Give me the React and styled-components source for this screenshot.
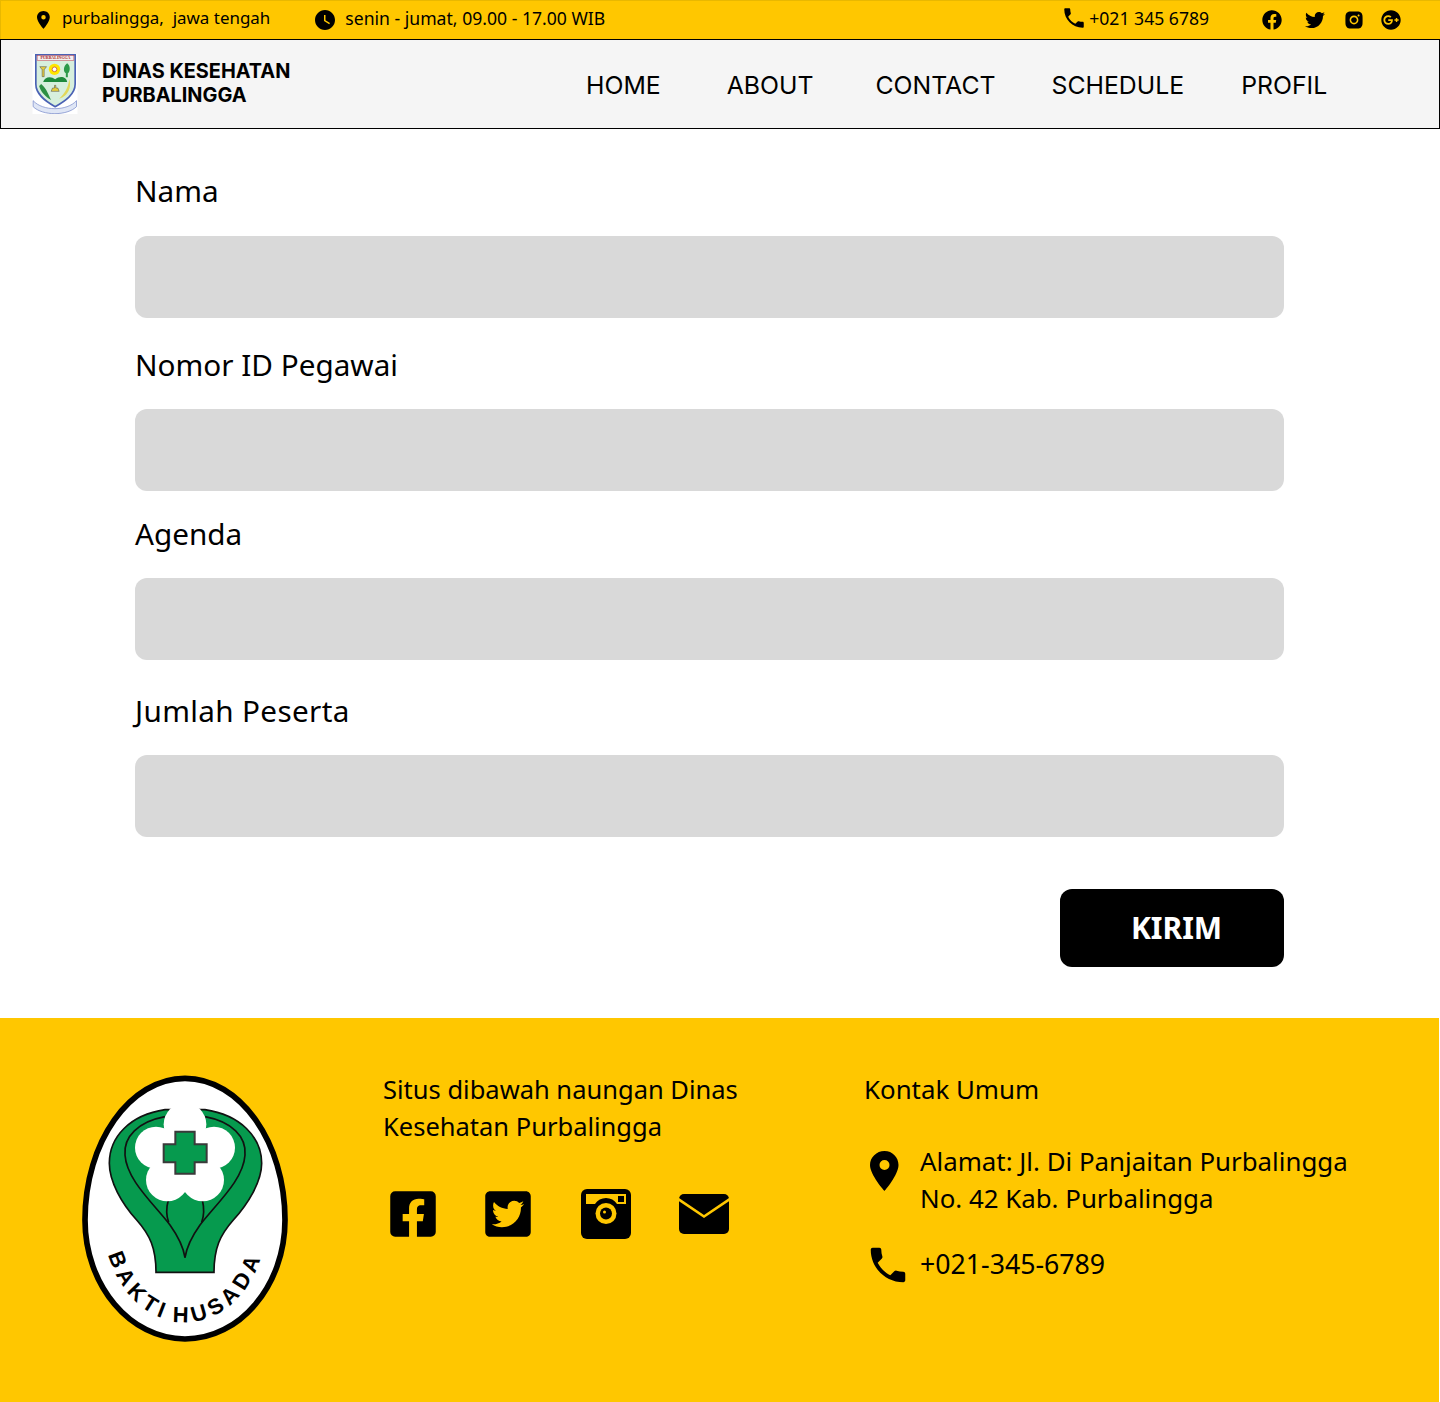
import React from 'react';
import styled, { createGlobalStyle } from 'styled-components';
import { FaFacebook, FaTwitter, FaGooglePlus, FaFacebookSquare, FaTwitterSquare } from 'react-icons/fa';
import { AiFillInstagram } from 'react-icons/ai';
import { MdWatchLater, MdPhone } from 'react-icons/md';

const Global = createGlobalStyle`
  html, body { margin: 0; padding: 0; background: #fff; }
  body { font-family: "Noto Sans", "Liberation Sans", sans-serif; color: #000; }
  * { box-sizing: border-box; }
`;

const Page = styled.div`
  width: 1440px;
  height: 1402px;
  display: flex;
  flex-direction: column;
  overflow: hidden;
`;

/* top bar */
const TopBar = styled.div`
  height: 40px;
  flex: none;
  background: #ffc700;
  border: 1px solid #e9b800;
  border-right: 0;
  display: flex;
  align-items: center;
  padding-bottom: 1px;
`;

const TopItem = styled.div`
  display: flex;
  align-items: center;
  margin-left: ${({ $left }) => $left}px;
  gap: ${({ $gap }) => $gap}px;
`;

const TopText = styled.span`
  font-size: ${({ $size }) => $size}px;
  margin-bottom: 4px;
  white-space: pre;
`;

const TopPhone = styled(MdPhone)`
  margin-bottom: 3px;
`;

const TopSocials = styled.div`
  display: flex;
  align-items: center;
  margin-left: 53px;
`;

const TopSocial = styled.div`
  width: ${({ $w }) => $w}px;
  display: flex;
`;

/* header */
const Header = styled.header`
  height: 90px;
  flex: none;
  margin-top: -1px;
  background: #f5f5f5;
  border: 1px solid #000;
  display: flex;
  align-items: center;
  padding-left: 31px;
  font-family: Inter, "Liberation Sans", sans-serif;
`;

const Brand = styled.div`
  margin-left: 24px;
  margin-bottom: 2px;
  font-size: 19.9px;
  line-height: 24px;
  font-weight: 700;
  width: 260px;
`;

const Nav = styled.nav`
  display: flex;
  margin-left: 224px;
  margin-top: 2px;
`;

const NavLink = styled.a`
  font-size: 24.8px;
  line-height: 30px;
  color: #000;
  margin-right: ${({ $gap }) => $gap}px;
  white-space: nowrap;
`;

/* form */
const Form = styled.main`
  flex: 1;
  padding: 0 156px 0 135px;
  display: flex;
  flex-direction: column;
`;

const Label = styled.label`
  display: block;
  font-size: 29.7px;
  line-height: 44px;
  letter-spacing: ${({ $spacing }) => $spacing}px;
  margin-top: ${({ $top }) => $top}px;
  margin-bottom: ${({ $bottom }) => $bottom}px;
`;

const Input = styled.div`
  height: 82px;
  border-radius: 12px;
  background: #d9d9d9;
`;

const Submit = styled.button`
  align-self: flex-end;
  width: 224px;
  height: 78px;
  margin-top: 52px;
  padding: 0 0 2px 9px;
  border: 0;
  border-radius: 12px;
  background: #000;
  color: #fff;
  font-family: "Noto Sans", sans-serif;
  font-size: 30px;
  font-weight: 700;
`;

/* footer */
const Footer = styled.footer`
  height: 384px;
  width: 1439px;
  flex: none;
  background: #ffc700;
  display: flex;
  line-height: 37px;
`;

const EmblemWrap = styled.div`
  width: 383px;
  flex: none;
  padding: 47px 0 0 70px;
`;

const MiddleCol = styled.div`
  width: 481px;
  flex: none;
  padding-top: 53px;
  font-size: 25.5px;
`;

const Socials = styled.div`
  display: flex;
  align-items: center;
  margin-top: 43px;
  margin-left: 4px;
`;

const SocialSlot = styled.div`
  width: ${({ $w }) => $w}px;
  display: flex;
`;

const ContactCol = styled.div`
  padding-top: 53px;
  font-size: 25.85px;
`;

const ContactRow = styled.div`
  display: flex;
  margin-top: ${({ $top }) => $top}px;
`;

const ContactIcon = styled.div`
  width: ${({ $w }) => $w}px;
  flex: none;
  display: flex;
  margin-left: ${({ $shift }) => $shift}px;
  margin-top: ${({ $up }) => $up}px;
  height: 0;
`;

const PhoneText = styled.div`
  font-size: 26.7px;
`;

const Emblem = () => (
  <svg width="230" height="285" viewBox="0 0 690 855">
    <path d="M345 40 C510 40 645 231 645 465 C645 661 510 822 345 822 C180 822 45 661 45 465 C45 231 180 40 345 40 Z" fill="#fff" stroke="#000" strokeWidth="17" />
    <path d="M285 134 C180 150 118 215 118 295 C118 350 155 415 200 465 C240 510 258 550 258 622 L432 622 C432 550 450 510 490 465 C535 415 575 350 575 295 C575 215 510 150 405 134 Z" fill="#069a4e" stroke="#111" strokeWidth="5" />
    <g fill="none" stroke="#111" strokeWidth="5">
      <path d="M285 155 C205 170 160 215 165 270 C170 345 250 415 300 480 C325 515 340 545 345 578" />
      <path d="M405 155 C485 170 530 215 525 270 C520 345 440 415 390 480 C365 515 350 545 345 578" />
      <path d="M295 405 C288 430 288 450 296 472" />
      <path d="M397 405 C403 430 403 450 395 472" />
    </g>
    <g fill="#fff">
      <circle cx="345" cy="178" r="64" />
      <circle cx="258" cy="248" r="63" />
      <circle cx="432" cy="248" r="63" />
      <circle cx="292" cy="345" r="64" />
      <circle cx="398" cy="345" r="64" />
      <circle cx="345" cy="270" r="80" />
    </g>
    <path d="M316 200 H374 V238 H410 V292 H374 V326 H316 V292 H281 V238 H316 Z" fill="#069a4e" stroke="#3a3a3a" strokeWidth="6" />
    <path id="bakti-arc" d="M100 465 C100 634 210 772 345 772 C480 772 590 634 590 465" fill="none" />
    <text fontFamily="Liberation Sans, sans-serif" fontWeight="700" fontSize="66" letterSpacing="14" wordSpacing="-12" fill="#000">
      <textPath href="#bakti-arc" startOffset="50%" textAnchor="middle">BAKTI HUSADA</textPath>
    </text>
  </svg>
);

const Crest = () => (
  <svg width="46" height="60" viewBox="0 0 135 180">
    <rect width="135" height="180" fill="#fff" />
    <path d="M10 2 H128 V90 C128 120 100 140 68 158 C36 140 10 120 10 90 Z" fill="#d7efdd" stroke="#4a62b5" strokeWidth="5" />
    <rect x="14" y="5" width="110" height="14" fill="#f4f0f0" stroke="#c4384c" strokeWidth="1.5" />
    <text x="69" y="16" textAnchor="middle" fontSize="12" fontWeight="700" fontFamily="Liberation Serif, serif" fill="#a22">PURBALINGGA</text>
    <circle cx="66" cy="46" r="17" fill="#ffe600" />
    <circle cx="66" cy="46" r="7" fill="#fff" stroke="#b33" strokeWidth="2" />
    <path d="M22 38 H42 L36 46 H35 V68 H29 V46 H28 Z" fill="#e8cf40" stroke="#444" strokeWidth="1.5" />
    <path d="M104 28 C116 36 112 56 106 58 V70 H100 V58 C92 54 92 36 104 28 Z" fill="#2c9a4a" />
    <path d="M32 84 C36 68 56 66 68 76 C82 64 102 68 104 84 Z" fill="#1f8a3c" />
    <path d="M26 90 C44 105 48 125 56 138 C38 128 24 112 20 96 Z" fill="#2c8f44" />
    <path d="M110 76 C120 105 100 130 80 134 C96 120 108 100 110 76 Z" fill="#e2d85a" />
    <path d="M56 112 H80 L76 102 H70 V94 H66 V102 H60 Z" fill="#e8cf40" stroke="#444" strokeWidth="1.5" />
    <path d="M2 140 C30 172 104 172 132 140 V158 C104 186 30 186 2 158 Z" fill="#dfe6f5" stroke="#6c80c6" strokeWidth="2" />
  </svg>
);

const CameraIcon = () => (
  <svg width="50" height="50" viewBox="0 0 50 50">
    <rect width="50" height="50" rx="6" fill="#000" />
    <path d="M5 5 H45 V15 H36 A13 13 0 0 0 14 15 H5 Z" fill="#ffc700" />
    <rect x="37" y="7" width="6" height="6" fill="#000" />
    <circle cx="25" cy="24.5" r="10.5" fill="#ffc700" />
    <circle cx="25" cy="24.5" r="6" fill="#000" />
    <circle cx="23.5" cy="23" r="1.5" fill="#ffc700" />
  </svg>
);

const MailIcon = () => (
  <svg width="50" height="40" viewBox="0 0 50 40">
    <rect width="50" height="40" rx="5" fill="#000" />
    <path d="M-1 5 L25 22.5 L51 5" fill="none" stroke="#ffc700" strokeWidth="2.6" />
  </svg>
);

const PinIcon = ({ w, h }) => (
  <svg width={w} height={h} viewBox="0 0 29 40">
    <path fillRule="evenodd" d="M14.5 0 C6.5 0 0 6.4 0 14 C0 24 14.5 40 14.5 40 C14.5 40 28.5 24 28.5 14 C28.5 6.4 22.5 0 14.5 0 Z M14.5 9 A5 5 0 1 1 14.5 19 A5 5 0 0 1 14.5 9 Z" fill="#000" />
  </svg>
);

const fields = [
  { label: 'Nama', top: 40, bottom: 23, spacing: 0 },
  { label: 'Nomor ID Pegawai', top: 25, bottom: 22, spacing: 0 },
  { label: 'Agenda', top: 21, bottom: 22, spacing: 0 },
  { label: 'Jumlah Peserta', top: 29, bottom: 22, spacing: 0.35 },
];

const links = [
  { text: 'HOME', gap: 66 },
  { text: 'ABOUT', gap: 62 },
  { text: 'CONTACT', gap: 56 },
  { text: 'SCHEDULE', gap: 57 },
  { text: 'PROFIL', gap: 0 },
];

export default function App() {
  return (
    <Page>
      <Global />
      <TopBar>
        <TopItem $left={36} $gap={12}>
          <PinIcon w={13} h={18} />
          <TopText $size={16.95}>purbalingga,  jawa tengah</TopText>
        </TopItem>
        <TopItem $left={43} $gap={8}>
          <MdWatchLater size={24} />
          <TopText $size={17.6}>senin - jumat, 09.00 - 17.00 WIB</TopText>
        </TopItem>
        <TopItem $left={456} $gap={2}>
          <TopPhone size={26} />
          <TopText $size={17.6}>+021 345 6789</TopText>
        </TopItem>
        <TopSocials>
          <TopSocial $w={43}><FaFacebook size={20} /></TopSocial>
          <TopSocial $w={38}><FaTwitter size={20} /></TopSocial>
          <TopSocial $w={38}><AiFillInstagram size={22} /></TopSocial>
          <TopSocial $w={20}><FaGooglePlus size={20} /></TopSocial>
        </TopSocials>
      </TopBar>

      <Header>
        <Crest />
        <Brand>DINAS KESEHATAN<br />PURBALINGGA</Brand>
        <Nav>
          {links.map((l) => (
            <NavLink key={l.text} $gap={l.gap}>{l.text}</NavLink>
          ))}
        </Nav>
      </Header>

      <Form>
        {fields.map((f) => (
          <div key={f.label}>
            <Label $top={f.top} $bottom={f.bottom} $spacing={f.spacing}>{f.label}</Label>
            <Input />
          </div>
        ))}
        <Submit>KIRIM</Submit>
      </Form>

      <Footer>
        <EmblemWrap>
          <Emblem />
        </EmblemWrap>
        <MiddleCol>
          <div>Situs dibawah naungan Dinas<br />Kesehatan Purbalingga</div>
          <Socials>
            <SocialSlot $w={95}><FaFacebookSquare size={52} /></SocialSlot>
            <SocialSlot $w={99}><FaTwitterSquare size={52} /></SocialSlot>
            <SocialSlot $w={98}><CameraIcon /></SocialSlot>
            <SocialSlot $w={50}><MailIcon /></SocialSlot>
          </Socials>
        </MiddleCol>
        <ContactCol>
          <div>Kontak Umum</div>
          <ContactRow $top={35}>
            <ContactIcon $shift={6} $w={50} $up={8}><PinIcon w={29} h={40} /></ContactIcon>
            <div>Alamat: Jl. Di Panjaitan Purbalingga<br />No. 42 Kab. Purbalingga</div>
          </ContactRow>
          <ContactRow $top={28}>
            <ContactIcon $shift={1} $w={55} $up={-3}><MdPhone size={46} /></ContactIcon>
            <PhoneText>+021-345-6789</PhoneText>
          </ContactRow>
        </ContactCol>
      </Footer>
    </Page>
  );
}
